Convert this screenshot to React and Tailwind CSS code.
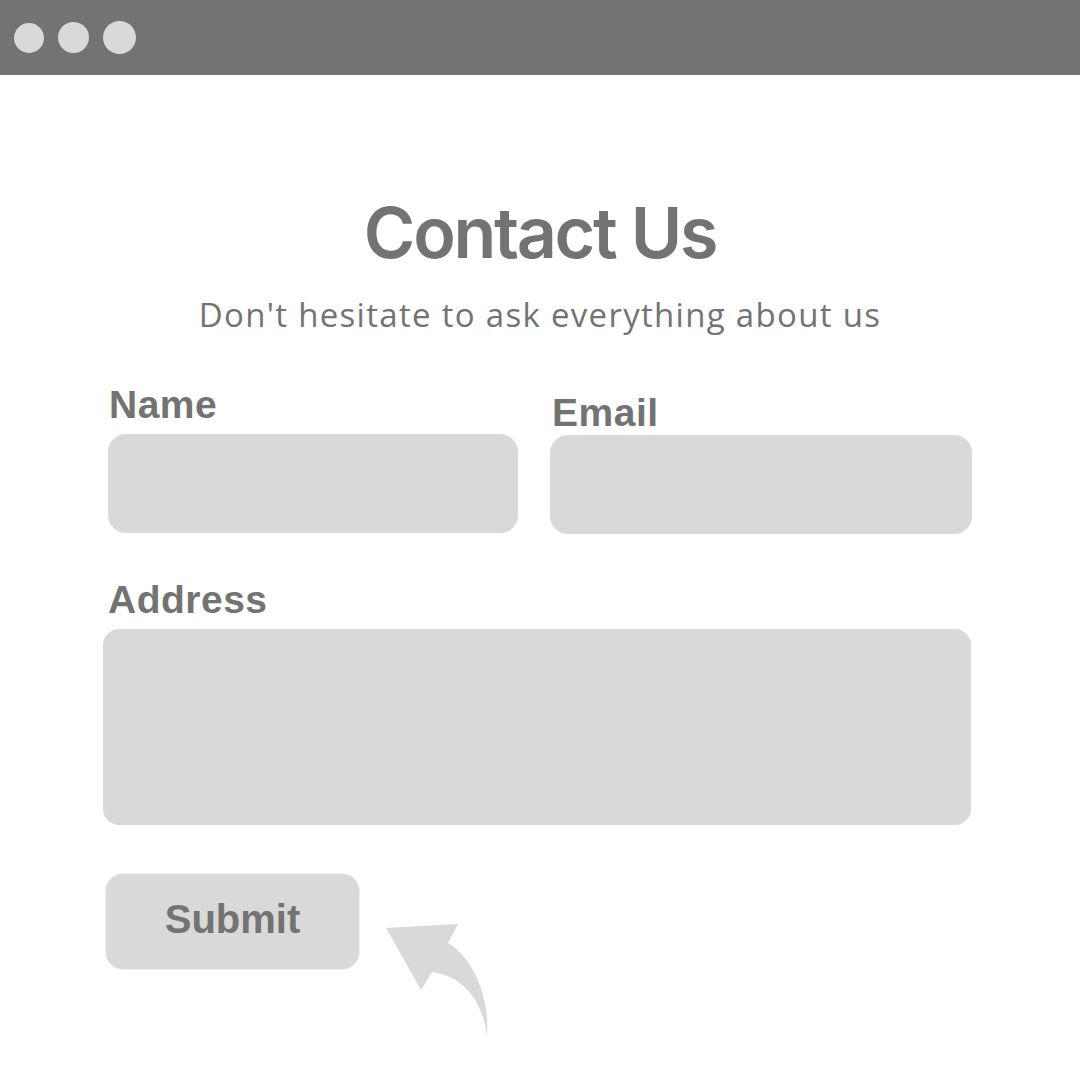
import React from "react";

const label = "font-['Liberation_Sans',Arial,sans-serif] font-bold text-[39px] leading-none tracking-[0.5px] text-[#737373]";

export default function App() {
    return (
        <div className="w-[1080px] h-[1080px] bg-white overflow-hidden flex flex-col">
            {/* Window bar */}
            <div className="h-[75px] bg-[#737373] flex items-center pl-[14px] shrink-0">
                <div className="w-[30px] h-[30px] rounded-full bg-[#d9d9d9]" />
                <div className="w-[31px] h-[31px] rounded-full bg-[#d9d9d9] ml-[14px]" />
                <div className="w-[33px] h-[33px] rounded-full bg-[#d9d9d9] ml-[14px]" />
            </div>

            {/* Heading */}
            <h1 className="mt-[123px] text-center font-['Inter',sans-serif] font-semibold text-[70px] leading-none tracking-[-0.033em] text-[#737373]">
                Contact Us
            </h1>
            <p className="mt-[30px] text-center font-['Open_Sans',sans-serif] text-[33px] leading-none tracking-[1.3px] text-[#737373]">
                Don't hesitate to ask everything about us
            </p>

            {/* Form */}
            <div className="pl-[108px] mt-[54px] flex flex-col">
                <div className="flex gap-[32px]">
                    <div className="flex flex-col w-[410px]">
                        <span className={`${label} ml-[1px]`}>Name</span>
                        <div className="mt-[10px] h-[99px] rounded-[18px] bg-[#d9d9d9]" />
                    </div>
                    <div className="flex flex-col w-[422px]">
                        <span className={`${label} mt-[8px] ml-[2px]`}>Email</span>
                        <div className="mt-[3px] h-[99px] rounded-[18px] bg-[#d9d9d9]" />
                    </div>
                </div>

                <span className={`${label} mt-[46px]`}>Address</span>
                <div className="mt-[10px] -ml-[5px] w-[868px] h-[196px] rounded-[16px] bg-[#d9d9d9]" />

                <div className="flex items-start mt-[48px] -ml-[3px]">
                    <button className="w-[255px] h-[97px] pb-[6px] rounded-[18px] bg-[#d9d9d9] border border-[#f0f0f0] font-['Liberation_Sans',Arial,sans-serif] font-bold text-[40px] text-[#737373]">
                        Submit
                    </button>
                    {/* Curved arrow pointing at the button */}
                    <svg className="mt-[42px] ml-[20px]" width="112" height="128" viewBox="0 0 112 128">
                        <path
                            d="M6 13 L78 9 L68 28 C92 42 110 80 107 122 C104 92 88 62 52 57 L41 75 Z"
                            fill="#d9d9d9"
                        />
                    </svg>
                </div>
            </div>
        </div>
    );
}
